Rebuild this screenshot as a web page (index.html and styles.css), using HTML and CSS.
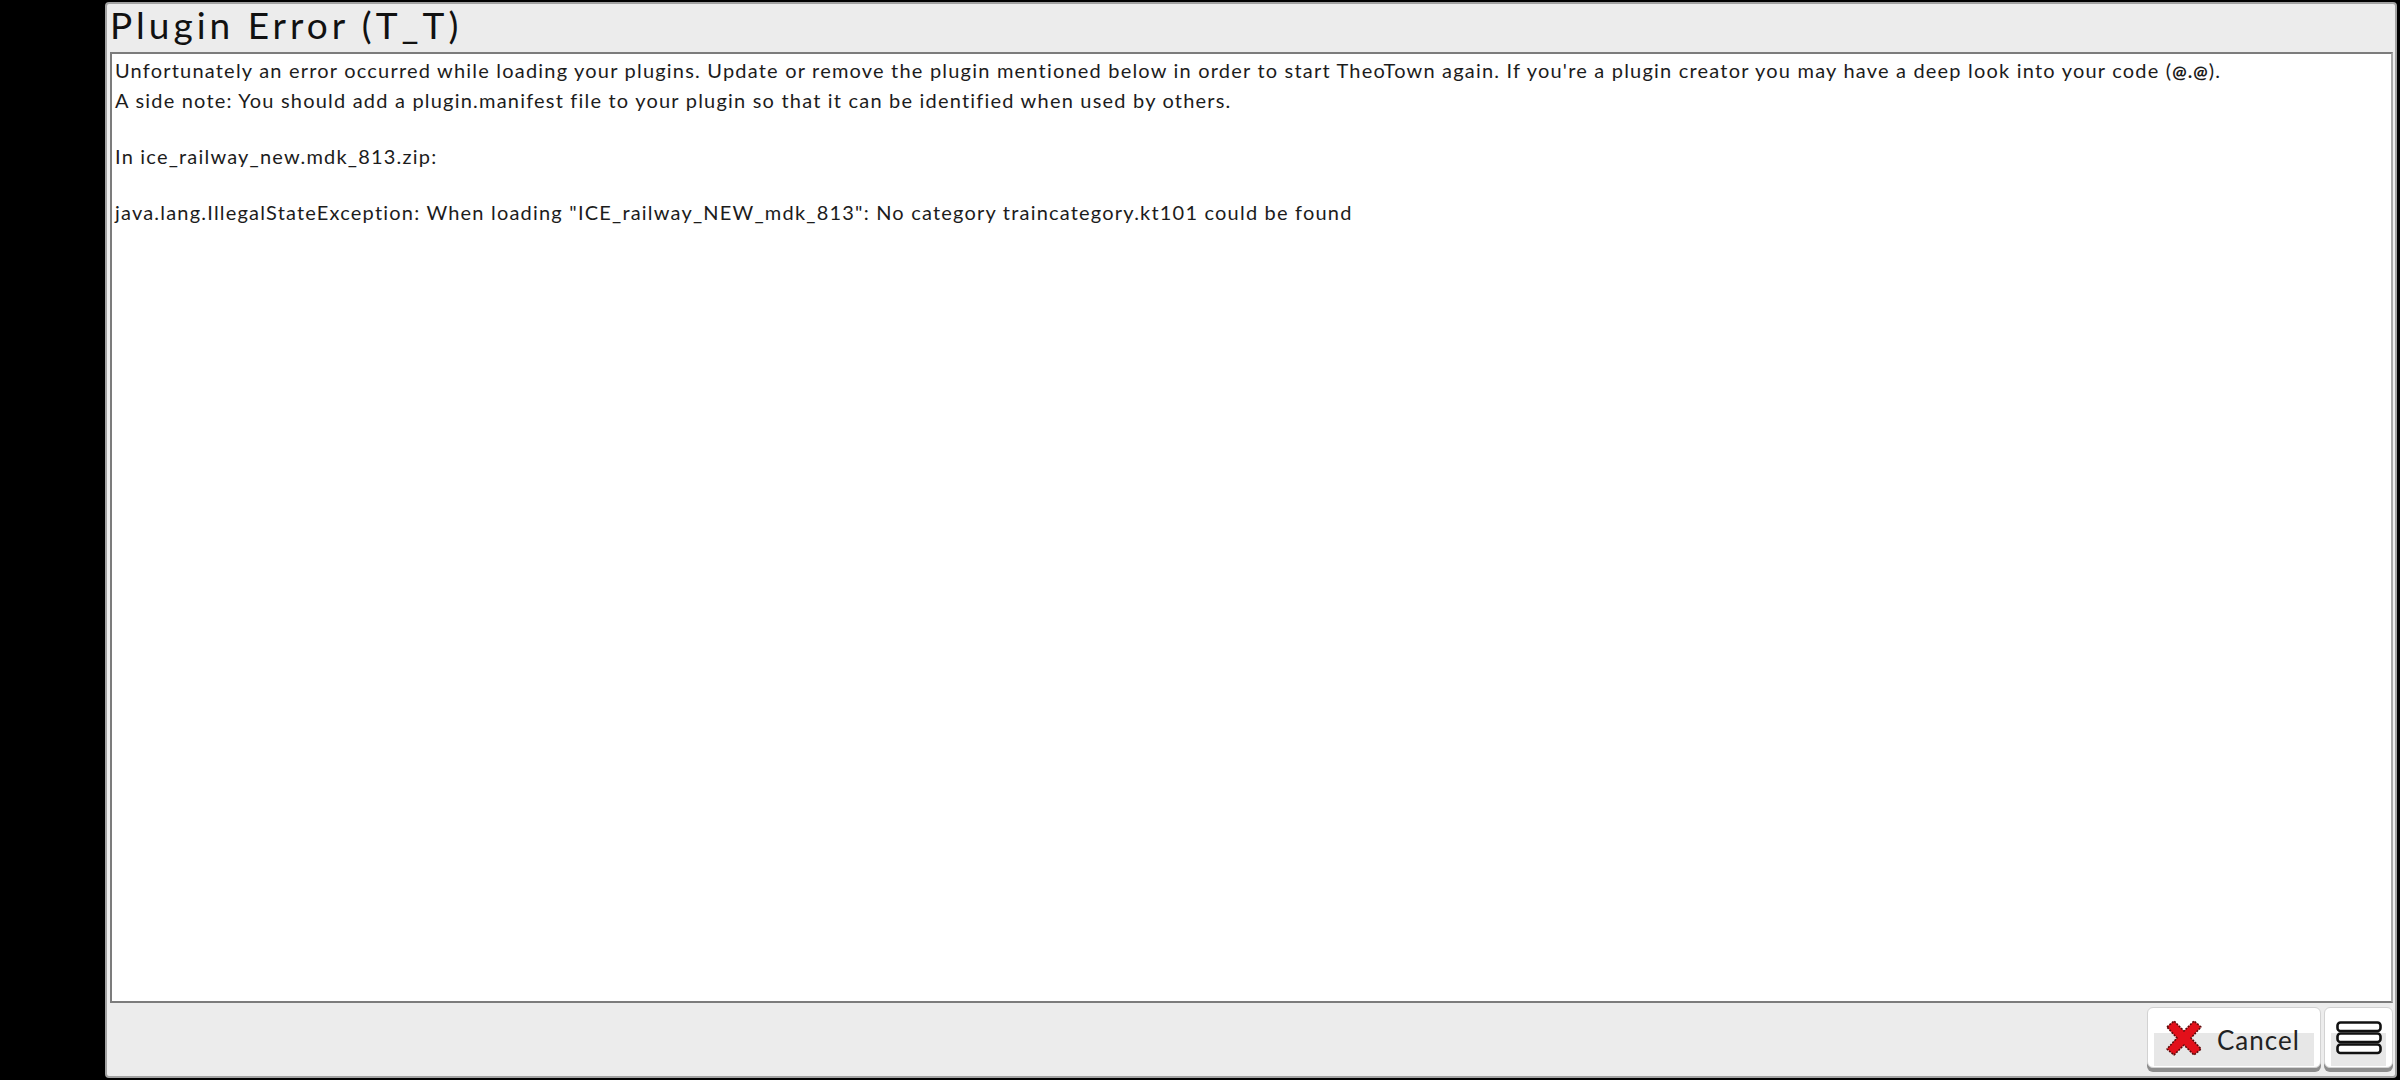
FILE: index.html
```html
<!DOCTYPE html>
<html>
<head>
<meta charset="utf-8">
<title>Plugin Error</title>
<link rel="stylesheet" href="styles.css">
</head>
<body>
<div class="window">
  <div class="titlebar">Plugin Error (T_T)</div>
  <div class="content">
    <p>Unfortunately an error occurred while loading your plugins. Update or remove the plugin mentioned below in order to start TheoTown again. If you're a plugin creator you may have a deep look into your code (<b class="at">@.@</b>).<br>A side note: You should add a plugin.manifest file to your plugin so that it can be identified when used by others.</p>
    <p>In ice_railway_new.mdk_813.zip:</p>
    <p>java.lang.IllegalStateException: When loading "ICE_railway_NEW_mdk_813": No category traincategory.kt101 could be found</p>
  </div>
  <div class="footer">
    <div class="btn cancel">
      <svg class="xicon" width="38" height="36" viewBox="0 0 38 36">
        <polygon points="2,7 9,1 19,11 29,1 36,7 26,18 36,29 29,35 19,25 9,35 2,29 12,18" fill="#e3101a" stroke="#5a0a0a" stroke-width="1.6" stroke-dasharray="2 1.2" stroke-linejoin="round"/>
      </svg>
      <span class="label">Cancel</span>
    </div>
    <div class="btn menu">
      <svg width="46" height="34" viewBox="0 0 46 34">
        <rect x="1.5" y="1.5" width="43" height="8.5" rx="3" fill="#fff" stroke="#111" stroke-width="2.6"/>
        <rect x="1.5" y="12.5" width="43" height="8.5" rx="3" fill="#fff" stroke="#111" stroke-width="2.6"/>
        <rect x="1.5" y="23.5" width="43" height="8.5" rx="3" fill="#fff" stroke="#111" stroke-width="2.6"/>
      </svg>
    </div>
  </div>
</div>
</body>
</html>
```
FILE: styles.css
```css
html, body {
  margin: 0;
  height: 100%;
}
body {
  background: #000;
  box-sizing: border-box;
  height: 1080px;
  padding: 2px 3px 2px 105px;
  display: flex;
  font-family: Lato, "Noto Sans", sans-serif;
}
.window {
  flex: 1;
  display: flex;
  flex-direction: column;
  background: #ececec;
  border: 2px solid #a2a2a2;
  border-radius: 4px;
  min-width: 0;
}
.titlebar {
  height: 48px;
  box-sizing: border-box;
  padding: 0 0 0 3px;
  font-size: 37px;
  line-height: 42px;
  letter-spacing: 4px;
  color: #111;
}
.content {
  flex: 1;
  margin: 0 2px 0 3px;
  background: #fff;
  border: 2px solid #7c7c7c;
  border-right-color: #a8a8a8;
  padding: 2px 3px;
  font-size: 20px;
  line-height: 28px;
  letter-spacing: 1.2px;
  color: #1c1c1c;
}
.content p {
  margin: 0 0 28px;
  white-space: nowrap;
}
.at {
  font-weight: 900;
  font-size: 17px;
}
.footer {
  height: 73px;
  box-sizing: border-box;
  display: flex;
  justify-content: flex-end;
  align-items: flex-start;
  gap: 3px;
  padding: 4px 2px 0 0;
}
.btn {
  height: 61px;
  box-sizing: border-box;
  border: 1px solid #d2d2d2;
  border-radius: 6px;
  background: linear-gradient(#e7e7e7, #e7e7e7) no-repeat 50% 25px / calc(100% - 12px) 33px, #fff;
  box-shadow: 0 4px 0 #8c8c8c;
  display: flex;
  align-items: center;
}
.cancel {
  width: 174px;
  padding: 0 0 0 17px;
  gap: 14px;
}
.xicon {
  flex: none;
}
.label {
  font-size: 26px;
  letter-spacing: 1px;
  color: #222;
  padding-top: 4px;
}
.menu {
  width: 69px;
  justify-content: center;
}
```
